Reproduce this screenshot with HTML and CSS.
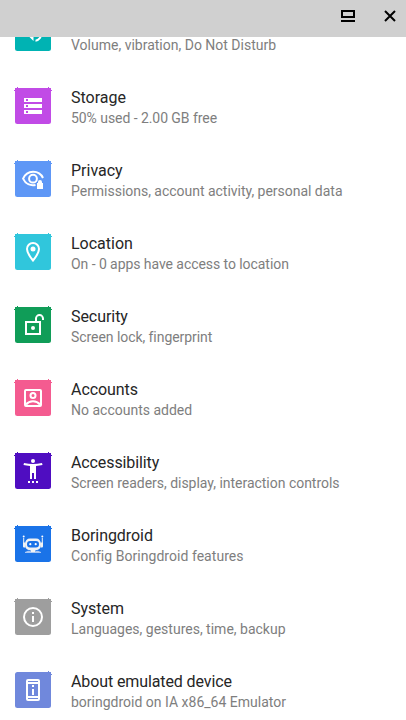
FILE: index.html
```html
<!DOCTYPE html>
<html lang="en">
<head>
<meta charset="utf-8">
<title>Settings</title>
<link rel="stylesheet" href="styles.css">
</head>
<body>
<svg class="defs" width="0" height="0" aria-hidden="true">
  <defs>
    <path id="nick-left" d="M-1 2h1v1h-1zM0 0h2v1h-1v1h-1zM2-1h1v1h-1z"/>
    <path id="nick-right" d="M36 2h1v1h-1zM34 0h2v2h-1v-1h-1zM33-1h1v1h-1z"/>
  </defs>
</svg>
<div class="window">
  <header class="caption">
    <button class="caption-button" aria-label="Restore"><svg width="16" height="14" viewBox="0 0 16 14"><path d="M2 2h12v6H2z" fill="none" stroke="#000" stroke-width="2"/><path d="M1 11h14v2H1z"/></svg></button>
    <button class="caption-button" aria-label="Close"><svg width="14" height="14" viewBox="0 0 14 14"><path d="M2 2l10 10M12 2L2 12" fill="none" stroke="#000" stroke-width="2"/></svg></button>
  </header>
  <main class="list">
    <div class="row">
      <svg class="tile teal" viewBox="0 0 36 36"><rect width="36" height="36" rx="2.5"/><g class="glyph" transform="translate(6.5 6)"><path d="M3 9v6h4l5 5V4L7 9zM14 3.2v2.1a7 7 0 0 1 0 13.4v2.1a9 9 0 0 0 0-17.6zM14 8v8a4.5 4.5 0 0 0 0-8z"/></g></svg>
      <div class="text"><h2>Sound</h2><p>Volume, vibration, Do Not Disturb</p></div>
    </div>
    <div class="row">
      <svg class="tile purple" viewBox="0 0 36 36"><rect width="36" height="36" rx="2.5"/><use href="#nick-left"/><use href="#nick-right"/><path class="glyph" fill-rule="evenodd" d="M9 10h18v4H9zM11 11v2h2v-2zM9 16h18v4H9zM11 17v2h2v-2zM9 22h18v4H9zM11 23v2h2v-2z"/></svg>
      <div class="text"><h2>Storage</h2><p class="snug">50% used - 2.00 GB free</p></div>
    </div>
    <div class="row">
      <svg class="tile blue" viewBox="0 0 36 36"><rect width="36" height="36" rx="2.5"/><use href="#nick-left"/><use href="#nick-right"/><path class="line" d="M28 17C24 8.7 12 8.7 8.1 17.7C10.5 23 15.5 25 20.5 23.9"/><circle class="line" cx="18" cy="17.7" r="3.9"/><path class="tile-gap" d="M21 21.500h8V28h-8z"/><path class="glyph" d="M22 22h1v-1a2 2 0 0 1 4 0v1h1v6h-6z"/></svg>
      <div class="text"><h2>Privacy</h2><p class="slight">Permissions, account activity, personal data</p></div>
    </div>
    <div class="row">
      <svg class="tile cyan" viewBox="0 0 36 36"><rect width="36" height="36" rx="2.5"/><use href="#nick-left"/><use href="#nick-right"/><path class="line" d="M18 26.5C14.3 22 12 18.3 12 15a6 6 0 0 1 12 0c0 3.300-2.300 7-6 11.500z"/><circle class="glyph" cx="18" cy="15" r="2.500"/></svg>
      <div class="text"><h2>Location</h2><p class="snug">On - 0 apps have access to location</p></div>
    </div>
    <div class="row">
      <svg class="tile green" viewBox="0 0 36 36"><rect width="36" height="36" rx="2.5"/><use href="#nick-left"/><use href="#nick-right"/><path class="line" d="M11 15h14v12H11zM21 15v-3.400a3.500 3.500 0 0 1 7 0v1.400"/><circle class="glyph" cx="18" cy="21" r="2"/></svg>
      <div class="text"><h2 class="snug">Security</h2><p class="snug">Screen lock, fingerprint</p></div>
    </div>
    <div class="row">
      <svg class="tile pink" viewBox="0 0 36 36"><rect width="36" height="36" rx="2.5"/><use href="#nick-left"/><use href="#nick-right"/><rect class="line" x="10" y="10" width="16" height="16" rx="1"/><circle class="line" cx="18" cy="15.500" r="2.500"/><path class="line" d="M11 24.500c3.500-4.300 10.500-4.300 14 0"/></svg>
      <div class="text"><h2 class="snug">Accounts</h2><p>No accounts added</p></div>
    </div>
    <div class="row">
      <svg class="tile violet" viewBox="0 0 36 36"><rect width="36" height="36" rx="2.5"/><use href="#nick-left"/><use href="#nick-right"/><circle class="glyph" cx="18" cy="8" r="2"/><path class="glyph" d="M9 10c6 1.300 12 1.300 18 0l.5 2c-2 .5-4 .8-6.500 1v13h-2v-6h-2v6h-2V13c-2.500-.2-4.500-.5-6.500-1zM13 28h2v2h-2zM17 28h2v2h-2zM21 28h2v2h-2z"/></svg>
      <div class="text"><h2 class="tight">Accessibility</h2><p class="slight">Screen readers, display, interaction controls</p></div>
    </div>
    <div class="row">
      <svg class="tile azure" viewBox="0 0 36 36"><rect width="36" height="36" rx="2.5"/><use href="#nick-left"/><use href="#nick-right"/><path class="robot" fill-rule="evenodd" d="M15 12.500h6c3 0 4.800 2 5 5.500c-.2 4.500-2 6-5 6h-6c-3 0-4.800-1.500-5-6c.2-3.500 2-5.500 5-5.500zM15 15c-2 0-3 1-3 3.200s1 3.300 3 3.300h6c2 0 3-1.100 3-3.300s-1-3.200-3-3.200z"/><path class="robot" d="M8.200 12h1v5h-1zM26.800 12h1v5h-1zM8 16.500h2.500v5H9a1 1 0 0 1-1-1zM25.500 16.500H28v4a1 1 0 0 1-1 1h-1.500zM15.500 23.500h5V26h-5z"/><path class="robot-base" d="M10 26l3-1.200h2.500V26h5v-1.200H23L26 26v1H10z"/><g class="glyph"><circle cx="8.700" cy="10.500" r="1"/><circle cx="27.300" cy="10.500" r="1"/><circle cx="15.300" cy="18.200" r="1.100"/><circle cx="20.700" cy="18.200" r="1.100"/></g></svg>
      <div class="text"><h2 class="snug">Boringdroid</h2><p class="loose">Config Boringdroid features</p></div>
    </div>
    <div class="row">
      <svg class="tile grey" viewBox="0 0 36 36"><rect width="36" height="36" rx="2.5"/><use href="#nick-left"/><use href="#nick-right"/><circle class="line" cx="18" cy="18" r="9"/><path class="glyph" d="M17 13h2v2h-2zM17 17h2v6h-2z"/></svg>
      <div class="text"><h2>System</h2><p>Languages, gestures, time, backup</p></div>
    </div>
    <div class="row">
      <svg class="tile indigo" viewBox="0 0 36 36"><rect width="36" height="36" rx="2.5"/><use href="#nick-right"/><path class="glyph" fill-rule="evenodd" d="M13 7h10a2 2 0 0 1 2 2v18a2 2 0 0 1-2 2H13a2 2 0 0 1-2-2V9a2 2 0 0 1 2-2zM13 9v1h10V9zM13 12v12h10V12zM13 26v1h10v-1zM17 13h2v2h-2zM17 17h2v6h-2z"/></svg>
      <div class="text"><h2 class="tight">About emulated device</h2><p>boringdroid on IA x86_64 Emulator</p></div>
    </div>
  </main>
</div>
</body>
</html>
```
FILE: styles.css
```css
* { box-sizing: border-box; }
body { margin: 0; background: #fff; font-family: Roboto, sans-serif; }
.defs { display: block; }
.window { height: 720px; overflow: hidden; display: flex; flex-direction: column; }
.caption {
  position: relative;
  z-index: 1;
  flex: 0 0 37px;
  display: flex;
  justify-content: flex-end;
  gap: 27px;
  padding: 9px 9px 0 0;
  background: #d0d0d0;
}
.caption-button { display: block; height: 14px; padding: 0; border: 0; background: none; }
.caption-button svg { display: block; }
.list { margin-top: -40px; }
.row { display: flex; gap: 20px; height: 73px; padding: 18px 15px 0; }
.tile { flex: 0 0 36px; width: 36px; height: 36px; overflow: visible; fill: currentColor; }
.glyph { fill: #fff; }
.line { fill: none; stroke: #fff; stroke-width: 2; }
.tile-gap { fill: currentColor; }
.robot { fill: #f1f3f4; }
.robot-base { fill: #a9c7f5; }
.teal { color: #00b3b3; }
.purple { color: #c14be6; }
.blue { color: #5e97f6; }
.cyan { color: #30c6dc; }
.green { color: #109d58; }
.pink { color: #f45b90; }
.violet { color: #4f0dc1; }
.azure { color: #1a73e8; }
.grey { color: #9e9e9e; }
.indigo { color: #7088dc; }
h2, p { margin: 0; font-weight: 400; white-space: nowrap; }
h2 { font-size: 16px; line-height: 20px; color: #262626; }
p { margin-top: 1px; font-size: 14px; line-height: 19px; color: #7e7e7e; }
.slight { letter-spacing: -0.02px; }
.snug { letter-spacing: -0.06px; }
.tight { letter-spacing: -0.11px; }
.loose { letter-spacing: 0.04px; }
```
